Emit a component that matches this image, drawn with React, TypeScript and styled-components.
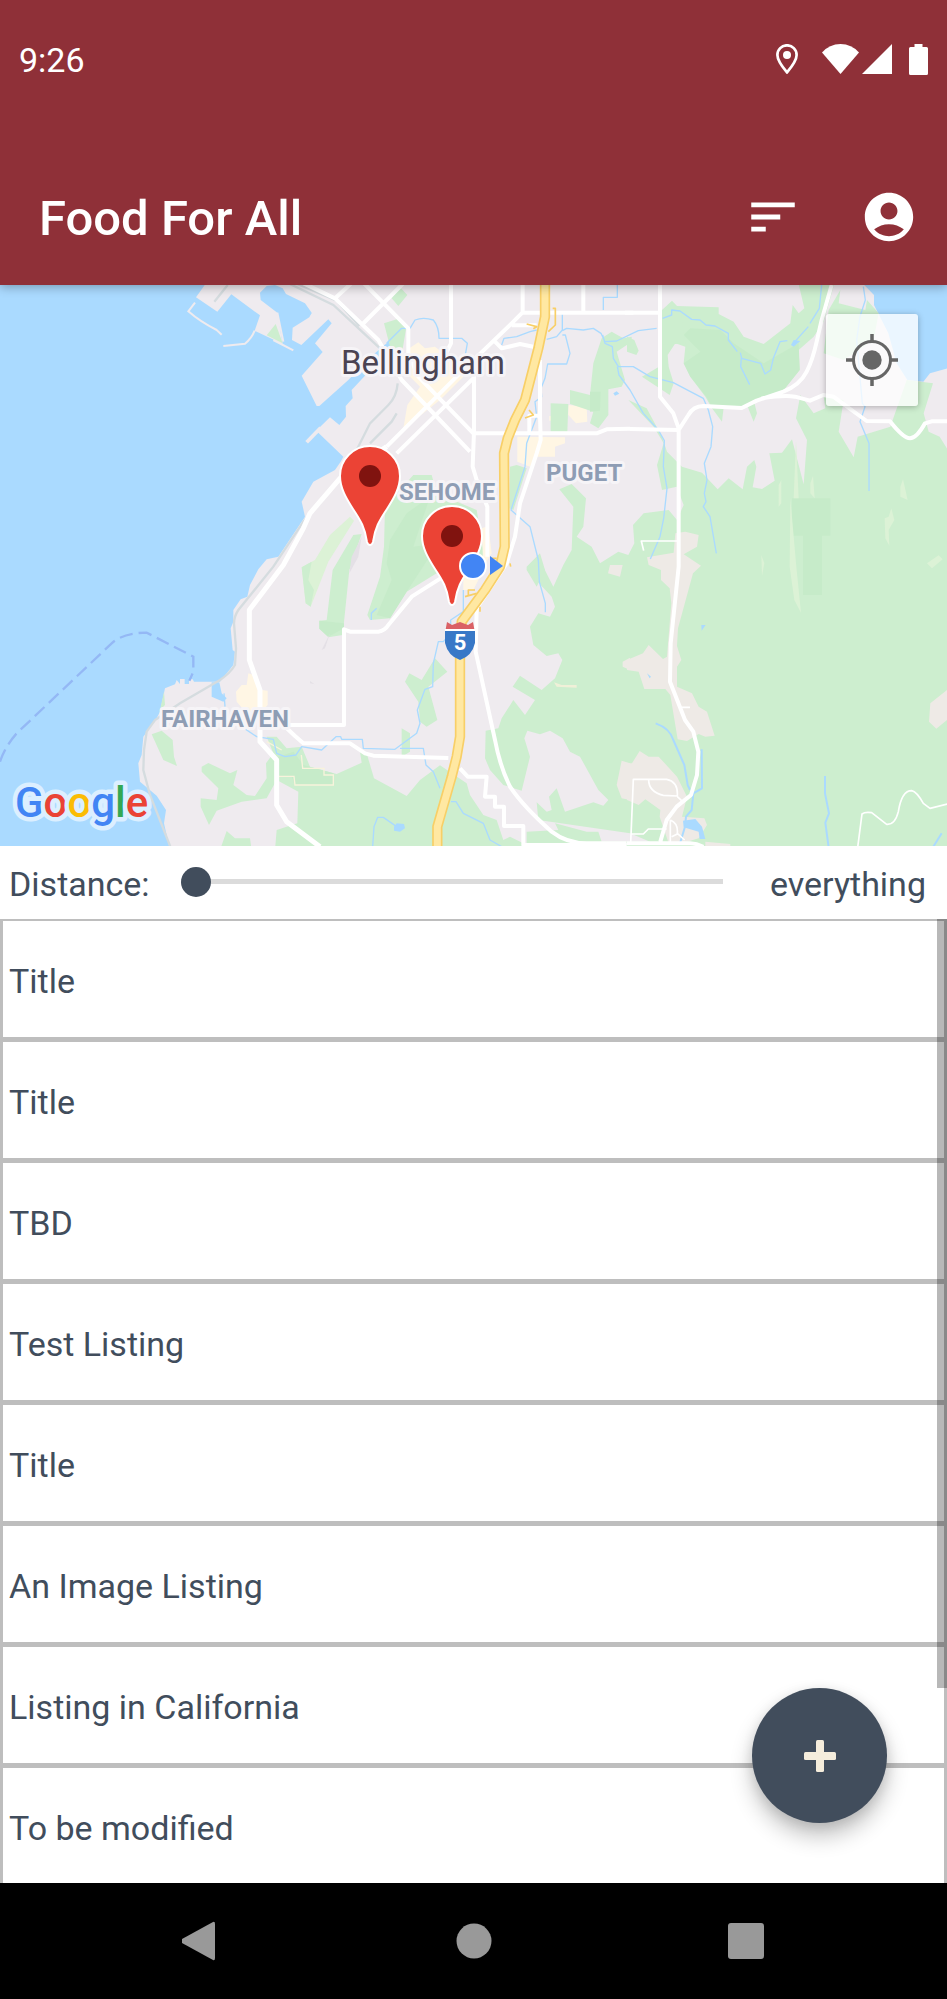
import React, { useState } from "react";
import styled, { createGlobalStyle } from "styled-components";
import { MdAccountCircle, MdSort } from "react-icons/md";

const ink = "#414d5c";
const water = "#aadaff";
const green = "#cdeecf";
const darkGreen = "#c6ebc9";
const paleGreen = "#dcf2d6";
const land = "#efebef";
const beige = "#eeeae6";
const sand = "#fff6e4";

const GlobalStyle = createGlobalStyle`
  *, *::before, *::after { box-sizing: border-box; }
  body { margin: 0; background: #ffffff; }
  button { border: 0; padding: 0; background: none; cursor: pointer; }
`;

const Screen = styled.div`
  display: flex;
  flex-direction: column;
  height: 100vh;
  min-height: 1400px;
  color: ${ink};
  font-family: Roboto, "Liberation Sans", sans-serif;
  font-size: 34px;
  line-height: 40px;
`;

const Header = styled.header`
  position: relative;
  z-index: 1;
  flex: none;
  color: #ffffff;
  background: #8f3038;
  box-shadow: 0 2px 10px rgba(0, 0, 0, 0.3);
`;

const StatusBar = styled.div`
  display: flex;
  align-items: center;
  justify-content: space-between;
  height: 120px;
  padding: 0 19px;
`;

const StatusIcons = styled.div`
  display: flex;
  align-items: center;
  padding-bottom: 2px;
`;

const StatusIcon = styled.svg<{ $gap: number }>`
  display: block;
  margin-left: ${(p) => p.$gap}px;
  fill: #ffffff;
`;

const AppBar = styled.div`
  display: flex;
  align-items: center;
  justify-content: space-between;
  height: 165px;
  padding: 29px 29px 0 39px;
`;

const AppTitle = styled.h1`
  margin: 0;
  padding-top: 4px;
  font-size: 49px;
  font-weight: 500;
  line-height: 56px;
`;

const Actions = styled.div`
  display: flex;
  gap: 58px;
`;

const ActionButton = styled.button`
  display: block;
  height: 58px;
  color: #ffffff;
  font-size: 58px;
  line-height: 1;

  svg { display: block; }
`;

const MapPanel = styled.section`
  position: relative;
  flex: none;
  height: 561px;
  overflow: hidden;
  background: ${water};
`;

const MapDrawing = styled.svg`
  display: block;
  width: 100%;
  height: 100%;
`;

const MapLabel = styled.text`
  fill: #8e9db4;
  stroke: #f6f4f7;
  stroke-width: 6px;
  stroke-linejoin: round;
  paint-order: stroke;
  font-size: 24px;
  font-weight: 700;
`;

const CityLabel = styled(MapLabel)`
  fill: #4b4453;
  font-size: 33px;
  font-weight: 400;
`;

const Brand = styled.text`
  stroke: #dcefff;
  stroke-width: 9px;
  stroke-linejoin: round;
  paint-order: stroke;
  font-size: 42px;
  font-weight: 500;
`;

const LocateButton = styled.button`
  position: absolute;
  top: 29px;
  right: 29px;
  width: 92px;
  height: 92px;
  border-radius: 3px;
  background: rgba(255, 255, 255, 0.76);
  box-shadow: 0 1px 6px rgba(0, 0, 0, 0.28);

  svg { display: block; margin: auto; }
`;

const DistanceRow = styled.div`
  display: flex;
  flex: none;
  align-items: center;
  height: 73px;
  padding: 2px 21px 0 9px;
`;

const DistanceLabel = styled.label`
  width: 172px;
`;

const Slider = styled.input`
  flex: 1;
  min-width: 0;
  height: 30px;
  margin: 0 47px 4px 0;
  appearance: none;
  background: linear-gradient(#dbdbdb, #dbdbdb) center / 100% 5px no-repeat;

  &::-webkit-slider-thumb {
    width: 30px;
    height: 30px;
    border: 0;
    border-radius: 50%;
    appearance: none;
    background: radial-gradient(circle, ${ink} 15px, #ffffff 15px);
    background: ${ink};
  }
`;

const ListPanel = styled.main`
  position: relative;
  flex: 1;
  min-height: 0;
  overflow: hidden;
`;

const Listings = styled.ul`
  margin: 0;
  padding: 0;
  list-style: none;
`;

const Listing = styled.li`
  display: flex;
  align-items: center;
  height: 121px;
  padding: 3px 0 0 6px;
  border: solid #bebebe;
  border-width: 2px 3px 3px;
`;

const ScrollThumb = styled.div`
  position: absolute;
  top: 0;
  right: 0;
  width: 10px;
  height: 79.8%;
  background: rgba(0, 0, 0, 0.28);
`;

const AddButton = styled.button`
  position: absolute;
  right: 60px;
  bottom: 60px;
  width: 135px;
  height: 135px;
  border-radius: 50%;
  background: ${ink};
  box-shadow: 0 13px 22px rgba(0, 0, 0, 0.24), 0 3px 12px rgba(0, 0, 0, 0.1);

  svg { display: block; margin: auto; }
`;

const SystemNav = styled.nav`
  display: flex;
  flex: none;
  align-items: center;
  justify-content: center;
  gap: 200px;
  height: 116px;
  background: #000000;
`;

const NavButton = styled.button`
  width: 72px;
  height: 72px;

  svg { display: block; margin: auto; fill: #999999; }
`;

/* Terrain is drawn on a sheet three units to the pixel, in six sections. */
function Terrain() {
  return (
    <g transform="translate(0 280) scale(.333333)">
      <rect width="2841" height="1710" fill={land} />
      <path
        fill={water}
        d="M0 0H625L588 52L652 95L694 43L780 106L764 152L848 192L832 98L782 60L780 38L800 18L825 15L848 25L858 42L915 70L935 98L928 112L878 143L876 180L904 195L985 118L995 130L945 190L968 216L905 287L950 378H958L1045 300L1115 228L1160 190L1200 145L1214 150L1180 190L1125 255L1055 330L1058 355L1037 378L1038 410L1018 435L990 412L930 470L955 458L1030 530L1022 545L1005 570L940 605L905 665L915 710L835 830L800 838L775 868L750 915L742 950L722 958L700 990V1025L692 1045L698 1110L705 1115L700 1155L660 1205H582L578 1198H567V1212H554V1197H540V1212L530 1200L525 1213L495 1225L480 1295L470 1315L455 1335L430 1370L425 1425L415 1450L420 1505L470 1547L498 1590L492 1630L510 1710H0Z"
      />
      <path fill={water} d="M635 1207H658L665 1240L680 1255L670 1265L635 1250ZM925 95L935 100L925 110Z" />
      <path fill={water} d="M2578 0H2860V260L2790 280L2770 305L2722 300L2690 250L2665 160L2622 75V45Z" />
      <g fill="none" stroke={land}>
        <path strokeWidth="6" d="M585 68L565 94Q600 125 650 150L665 164M670 198L735 191Q755 175 764 152M820 180L880 211M832 98L850 185" />
        <path strokeWidth="11" d="M920 487L962 443" />
      </g>
      <path fill={green} d="M827 132L848 190L800 166ZM480 1290L492 1235L495 1275ZM455 1363L485 1352L518 1380L522 1430L531 1458L490 1440Z" />

      {/* woods west of the highway */}
      <path fill={paleGreen} d="M905 862L945 840L990 765L1050 710L1062 722L985 845L932 980L917 970Z" />
      <path fill={green} d="M905 862L935 845L925 900L942 930L932 980L917 970Z" />
      <g transform="translate(930 0)">
        <path fill={green} d="M245 55L270 22L292 45L265 78ZM222 130L270 115L290 135L275 225L240 200Z" />
        <path fill={green} d="M68 870L130 765L155 762L118 870L98 1065L55 1072L28 1046V1022L50 1020Z" />
        <path fill={darkGreen} d="M28 1022L102 1030V1045L55 1070L28 1046Z" />
        <path fill={green} d="M225 680L310 585L365 585L380 640L500 690L530 870L380 880L290 935L240 1015L180 1020L172 1005L210 890L222 800Z" />
        <path fill={darkGreen} d="M230 850L240 780L290 700L360 650L310 800L385 790L290 935L240 1015L200 1005L245 900Z" />
        <path fill={sand} d="M290 210L325 187L345 205L375 200L420 235L460 290L390 360L340 400L280 445L292 375L330 320L285 275ZM515 745L535 738L545 820L520 860ZM460 870H520L490 930H460Z" />
        <path fill={sand} d="M622 470L765 472L765 490L735 500L735 530L680 530L660 560L622 545ZM775 375L830 380L832 425L798 430L775 405ZM718 408H730V422H718Z" />
        <path fill={green} d="M620 555L650 565L610 690L598 685L600 560ZM650 860L690 820L705 870L680 920L650 870Z" />
        <path fill={green} d="M722 370L775 372L772 455L722 455ZM780 330L840 345L850 250L875 175L905 155L940 175L965 170V185L920 215L945 300L935 320L895 328L895 405L865 445L840 430L850 395L780 372Z" />
        <path fill={darkGreen} d="M840 335L872 335L870 392L840 395Z" />
        <path fill={green} d="M375 1135L412 1175L355 1220L382 1320L350 1340L330 1325L325 1265L285 1205L298 1180L335 1200ZM275 1345L300 1360V1415L275 1430Z" />
        <path fill="#e4e0e6" d="M155 770L145 830L118 880L125 830ZM0 1203L14 1213L0 1210ZM60 1060L45 1105L35 1110Z" />
      </g>

      {/* southern green belt */}
      <path fill={green} d="M605 1460L625 1449L690 1480L712 1470L700 1515L740 1545L765 1548L800 1495L798 1450L820 1420L800 1370L830 1370L860 1405L905 1400L930 1460L1010 1482L1085 1448L1080 1415L1100 1420L1122 1495L1220 1548L1260 1500L1320 1456L1400 1510L1410 1545L1450 1605L1490 1620L1510 1680L1530 1670L1570 1690V1710H825L830 1650L892 1630L895 1535L830 1500L800 1555L725 1565L650 1592L627 1635L602 1580V1555L650 1560L655 1525L605 1475ZM660 1710L680 1653L705 1675L750 1675L755 1710Z" />
      <path fill={darkGreen} d="M835 1430L880 1415L910 1455L1000 1480V1515H885L875 1490H835Z" />
      <path fill="none" stroke="#f8f3dc" strokeWidth="4" d="M800 1385L845 1410M835 1489H882L885 1515H1000V1485H972V1465H908L904 1425" />

      {/* eastern forest */}
      <path fill={green} d="M1580 870L1610 855L1632 865L1660 920L1690 855L1715 810L1720 680L1678 628L1715 612L1758 655L1750 740L1730 770L1775 800L1800 850L1855 815L1885 825L1903 790L1899 735L1931 700L2006 690L2031 720L2051 675L2030 620L1986 630L1971 555L1991 490L1961 440L1885 360L1940 385L1986 470L2001 515L2046 560L2106 578L2153 628L2186 595L2228 628L2241 560L2263 540L2269 560L2258 622L2286 627L2324 602L2308 520L2346 518L2376 478L2411 613L2421 480L2388 415L2401 345L2441 400L2476 385L2471 350L2531 360L2516 455L2561 532L2573 470L2671 440L2720 300L2799 310L2771 400L2786 455L2819 470L2850 520V1710H1580V1655L1675 1650L1665 1630L1760 1655L1795 1655L1805 1685H1950L1890 1660L1615 1620L1610 1567L1640 1595L1655 1590L1647 1550L1670 1525L1695 1595L1780 1567L1810 1577L1825 1560L1795 1530L1740 1430L1710 1415L1688 1375L1650 1352L1620 1363L1582 1352L1573 1375L1590 1430L1565 1532L1510 1515L1470 1470L1455 1435L1457 1352L1495 1345L1505 1315L1540 1260L1575 1305L1605 1260L1538 1220L1560 1187L1625 1230L1665 1195L1687 1140L1675 1120L1640 1128L1600 1095L1590 1040L1615 1000L1650 1010L1665 980L1655 950Z" />
      <g transform="translate(1881 0)">
        <path fill={green} d="M105 90L135 62L150 78L275 82V102L320 125L350 170L410 192L490 130L497 75L515 100L532 85L512 0H625L590 125L560 170L515 210L518 270L470 330L380 360L390 400L380 425L360 375L290 382L285 425L255 385L235 350L190 290L170 250L175 200L145 190L122 225L125 260L140 310L128 345L45 290L105 255ZM0 170L22 180L35 212L28 225L0 215ZM640 30L605 90L590 220L650 240L740 180L755 100L720 60L715 90L635 70Z" />
        <path fill={darkGreen} d="M170 165L190 145L280 150L320 190L410 250L515 190L518 270L470 330L345 380L255 380L238 350L190 290L170 250L220 215ZM495 655H610V767H585V945H528V767H495Z" />
        <path fill={green} d="M105 90H160L175 190L105 195Z" />
        <path fill={paleGreen} d="M507 480L515 655H500ZM490 655L508 860L522 998L502 960L488 860ZM455 615L463 600V670L455 680ZM550 610L558 588L563 655L550 640ZM820 620L828 598L842 660L820 650ZM773 715L785 710L793 685L802 720L785 750L787 797L775 775ZM900 850L935 826L947 838L915 865ZM403 825L412 850L405 888Z" />
        <path fill={beige} d="M60 832L140 818L145 760L175 755L215 765L210 800L170 823L222 857L198 880L153 1045L150 1098L163 1140L150 1160V1220L195 1240L215 1280L240 1295L263 1367L235 1370L215 1362L180 1383L152 1378L130 1245L115 1227H52L35 1175L0 1170V1140L48 1120L65 1095L108 1137L120 1130L133 970L128 925L102 900V870L65 855ZM0 1450L15 1450L38 1413L65 1430H95L150 1490L180 1550L165 1610L232 1615L240 1635L215 1675L180 1685L125 1690L98 1610L100 1590L55 1558L35 1575L0 1560ZM910 1270L960 1230V1320L928 1346L906 1325ZM235 1685L310 1692V1710H235Z" />
        <path fill={water} d="M168 1622L205 1617L225 1640L235 1677H218L215 1655L170 1642ZM223 1035H236L224 1052ZM60 1180L72 1190L68 1195ZM492 195L500 180L520 183L500 200Z" />
      </g>
      <path fill={beige} d="M1830 855H1868L1860 890L1824 880ZM1868 1145L1890 1133V1170L1868 1160ZM1850 1515L1865 1442L1890 1450V1560L1865 1555Z" />
      <path fill="#f0f0d8" d="M1662 1207L1685 1215H1730V1223L1670 1220Z" />

      {/* creeks */}
      <g fill="none" stroke={water} strokeWidth="4" strokeLinejoin="round">
        <path d="M1160 190L1205 145H1230L1245 120Q1270 110 1300 120Q1317 140 1317 175H1385L1402 190L1395 230" />
        <path d="M1505 195L1512 175L1550 170L1590 155L1610 150M1687 100V150L1670 170L1640 178M1687 165H1696L1710 220L1700 252H1643L1635 295L1623 325L1625 350L1605 365L1610 410L1580 490L1575 560L1533 690L1590 740L1615 840L1618 905L1636 970V997M1687 152L1700 145L1750 150L1780 145L1803 160L1815 185L1850 183L1915 152L1970 145M1808 165L1815 190L1837 200L1840 235L1855 260H1900L1950 290L2020 308L2110 355L2125 390L2138 440L2133 500L2113 550L2121 600L2113 640L2118 665L2110 680L2130 710L2149 820M1852 260L1857 285L1890 330L1930 400L1975 450L1993 482L1990 560L2001 625L1991 715L1980 770L1951 837M1810 90V52H1852V15" />
        <path d="M1988 115L2015 105V90L2040 93L2075 118L2100 120L2118 135L2145 138L2185 160V180L2212 215M2221 218L2225 235L2282 250L2295 282L2312 270L2320 235L2340 185L2362 182M2224 235L2222 260L2249 314M2465 15L2458 85L2430 130M2380 190L2425 140M2590 20L2596 60L2580 110L2570 180L2587 370L2595 380L2580 425L2607 490V633" />
        <path d="M1390 930V995L1352 1020L1352 1060L1330 1085L1315 1085L1300 1150L1298 1220L1275 1228L1252 1290L1260 1330L1250 1360L1185 1408L1090 1405L1087 1378H1025L1022 1370H1008L965 1410L905 1400L888 1425L855 1430L830 1420L820 1378L770 1370L725 1340M1200 1405H1270L1278 1455L1300 1475L1320 1525M1353 1565H1368L1390 1600L1450 1630L1470 1680L1505 1700M1190 1640L1150 1612H1133L1122 1640L1118 1700M1114 1020V1000L1130 985M672 1240L675 1280" />
        <path d="M1967 1330Q2010 1345 2020 1380L2053 1455L2063 1515L2070 1530M2105 1408L2106 1525L2080 1540L2075 1590L2058 1610L2055 1640L2040 1690M2475 1488V1540L2487 1600L2476 1628L2487 1710M2800 1700L2825 1660" strokeWidth="6" />
      </g>
      <path fill={water} d="M1182 1640L1190 1630L1212 1632L1215 1645L1200 1655L1182 1652ZM1840 340L1850 334L1858 341L1845 347Z" />
      <path fill="none" stroke="#94b8f5" strokeWidth="7" strokeDasharray="40 18" d="M0 1445Q15 1400 50 1360L335 1090Q370 1058 440 1058L580 1130V1175L568 1202" />
      <path fill={sand} d="M708 1235L725 1215H740L745 1180L760 1185L785 1230L803 1232V1275L780 1300H740L710 1265Z" />

      {/* railway */}
      <path fill="none" stroke="#d5dcdf" strokeWidth="7" d="M643 65L683 15M845 0L1000 75L1070 140L1140 205M865 0L1010 62L1078 138M1193 310Q1190 350 1165 375L1110 430L1070 510L1015 600L960 670L910 725L820 860L715 990Q702 1010 702 1030L708 1105L705 1155Q690 1180 660 1200L540 1270L465 1320L440 1355L432 1410L430 1470L450 1545L515 1710M1190 400L1175 425L1110 490" />

      {/* streets */}
      <g fill="none" stroke="#ffffff" strokeWidth="12" strokeLinejoin="round">
        <path d="M890 0L1005 55L1135 180L1205 300L1410 515M1005 55L1065 0M1082 0L1225 145V220L1255 290L1420 460M1220 0L1088 132M1353 15V190L1338 220M1900 98H1567L1535 130L1400 260L1160 500M1190 520L1425 290M1535 136H1610M1485 185L1505 205L1560 192L1600 200M1568 15V98M1750 15V95M1422 285V455L1418 560L1430 600L1462 680V830M1420 460H1790L1820 448L1890 446M1620 240V405L1622 480L1610 520L1560 670L1545 770L1520 850L1430 985L1427 1115L1485 1380Q1500 1460 1530 1520Q1570 1580 1655 1655Q1700 1690 1760 1690H1880M1588 455V407H1620" />
        <path strokeWidth="15" d="M1160 500L1020 595L930 700L910 745L850 855L748 990V1140L780 1230V1385L830 1440V1575L860 1625L960 1700" />
        <path d="M1330 890L1235 950L1165 1035Q1155 1052 1135 1055H1050L1032 1048V1335H850L885 1368L910 1390H1050L1095 1420L1120 1427L1345 1434M1380 1465L1403 1490H1460L1455 1550H1485V1580H1512V1638H1570V1695H1880" />
        <path d="M1875 98H1980V15V350L2020 400L2036 445V860L2012 1090L2010 1205L2055 1320L2080 1355L2095 1415L2091 1485L2073 1545L2030 1580L2000 1620L1981 1685M1890 447L2036 450L2065 405Q2080 378 2110 378L2225 384L2270 362L2350 335Q2400 315 2420 275Q2438 240 2450 185L2465 120L2495 15M2285 355Q2350 345 2385 350L2430 362L2470 345L2500 350L2600 423L2670 424Q2710 475 2730 475Q2750 475 2775 430L2795 424H2850M1881 1690H2070Q2090 1690 2110 1700" />
        <path strokeWidth="5" d="M1931 812L1924 783H2034M2046 1282H2070M1892 1690L1900 1498H2000Q2035 1505 2032 1548L1990 1546Q1945 1535 1946 1498M1892 1662H1930L1945 1647H2000M2032 1550L2045 1562M2011 1620Q2035 1630 2032 1660L2054 1680M2011 1620V1690M2015 1670L2032 1662M2572 1710L2586 1602Q2595 1595 2615 1598L2660 1633Q2685 1635 2695 1595Q2705 1532 2735 1532Q2750 1535 2770 1570L2790 1585L2850 1570" />
      </g>

      {/* interstate */}
      <g fill="none" strokeLinejoin="round">
        <path stroke="#f8cf67" strokeWidth="5" d="M1580 132L1610 140L1600 146M1658 85H1666V135L1645 155M1587 390L1600 405L1575 414M1425 930H1405V945M1430 940L1395 950M1440 980V995M1475 835H1490M1530 850L1532 860" />
        <path stroke="#f8cf67" strokeWidth="31" d="M1635 0V110L1615 205L1575 360L1545 420L1523 475L1512 520L1514 800L1500 860L1455 930L1385 1025L1380 1120V1370L1370 1430L1355 1490L1312 1640V1710" />
        <path stroke="#ffe8a2" strokeWidth="21" d="M1635 0V110L1615 205L1575 360L1545 420L1523 475L1512 520L1514 800L1500 860L1455 930L1385 1025L1380 1120V1370L1370 1430L1355 1490L1312 1640V1710" />
      </g>
    </g>
  );
}

function Marker({ x, y }: { x: number; y: number }) {
  return (
    <g transform={`translate(${x} ${y})`}>
      <path
        d="M0 -30A30 30 0 0 0 -30 0C-30 12 -24 22 -17 33C-9 45 -5 52 -3 66Q-2 69 0 69Q2 69 3 66C5 52 9 45 17 33C24 22 30 12 30 0A30 30 0 0 0 0 -30Z"
        fill="#eb4335"
        stroke="#ffffff"
        strokeWidth="2"
      />
      <circle r="11" fill="#80130f" />
    </g>
  );
}

function AreaMap() {
  return (
    <MapDrawing viewBox="0 285 947 561" preserveAspectRatio="xMidYMid slice" role="img" aria-label="Map of Bellingham">
      <Terrain />
      <CityLabel x="341" y="374">Bellingham</CityLabel>
      <MapLabel x="399" y="500">SEHOME</MapLabel>
      <MapLabel x="546" y="481">PUGET</MapLabel>
      <MapLabel x="161" y="727">FAIRHAVEN</MapLabel>
      <g transform="translate(460 641)">
        <path d="M-15 -8L-13 -19L-8 -16L0 -19L8 -16L13 -19L15 -8Z" fill="#da6166" />
        <path d="M-15 -10H15V2Q12 15 0 19Q-12 15 -15 2Z" fill="#3878c7" />
        <path d="M-15 -11H15" stroke="#ffffff" strokeWidth="2" />
        <text y="9" textAnchor="middle" fill="#ffffff" fontSize="22" fontWeight="700">5</text>
      </g>
      <Marker x={370} y={476} />
      <Marker x={452} y={536} />
      <path d="M490 556L503 566L490 575Z" fill="#4285f4" />
      <circle cx="473" cy="566" r="13" fill="#4285f4" stroke="#ffffff" strokeWidth="2" />
      <Brand x="15" y="817">
        <tspan fill="#4285f4">G</tspan>
        <tspan fill="#ea4335">o</tspan>
        <tspan fill="#fbbc04">o</tspan>
        <tspan fill="#4285f4">g</tspan>
        <tspan fill="#34a853">l</tspan>
        <tspan fill="#ea4335">e</tspan>
      </Brand>
    </MapDrawing>
  );
}

const listings = [
  "Title",
  "Title",
  "TBD",
  "Test Listing",
  "Title",
  "An Image Listing",
  "Listing in California",
  "To be modified",
];

export default function App() {
  const [distance, setDistance] = useState(0);

  return (
    <>
      <GlobalStyle />
      <Screen>
        <Header>
          <StatusBar>
            <span>9:26</span>
            <StatusIcons>
              <StatusIcon $gap={0} width="22" height="30" viewBox="0 0 22 30">
                <path d="M11 1.3A9.6 9.6 0 0 0 1.4 10.9C1.4 17 7 23.5 11 28.3C15 23.5 20.6 17 20.6 10.9A9.6 9.6 0 0 0 11 1.3Z" fill="none" stroke="#ffffff" strokeWidth="2.7" />
                <circle cx="11" cy="11" r="4" />
              </StatusIcon>
              <StatusIcon $gap={24} width="37" height="30" viewBox="0 0 37 30">
                <path d="M0 8.5Q7.5 0 18.5 0T37 8.5L18.5 30Z" />
              </StatusIcon>
              <StatusIcon $gap={3} width="30" height="30" viewBox="0 0 30 30">
                <path d="M30 0V30H0Z" />
              </StatusIcon>
              <StatusIcon $gap={17} width="19" height="31" viewBox="0 0 19 31">
                <path d="M5.5 0H13.5V3H17.5Q19 3 19 4.5V29.5Q19 31 17.5 31H1.5Q0 31 0 29.5V4.5Q0 3 1.5 3H5.5Z" />
              </StatusIcon>
            </StatusIcons>
          </StatusBar>
          <AppBar>
            <AppTitle>Food For All</AppTitle>
            <Actions>
              <ActionButton aria-label="Sort listings"><MdSort /></ActionButton>
              <ActionButton aria-label="Account"><MdAccountCircle /></ActionButton>
            </Actions>
          </AppBar>
        </Header>

        <MapPanel>
          <AreaMap />
          <LocateButton aria-label="Show my location">
            <svg width="52" height="52" viewBox="0 0 52 52" fill="none" stroke="#666666">
              <circle cx="26" cy="26" r="18.5" strokeWidth="3" />
              <path d="M26 0V8M26 44V52M0 26H8M44 26H52" strokeWidth="3.5" />
              <circle cx="26" cy="26" r="9.7" fill="#666666" stroke="none" />
            </svg>
          </LocateButton>
        </MapPanel>

        <DistanceRow>
          <DistanceLabel htmlFor="distance">Distance:</DistanceLabel>
          <Slider
            id="distance"
            type="range"
            min={0}
            max={100}
            value={distance}
            onChange={(e) => setDistance(Number(e.target.value))}
          />
          <output htmlFor="distance">{distance === 0 ? "everything" : `${distance} mi`}</output>
        </DistanceRow>

        <ListPanel>
          <Listings>
            {listings.map((name, i) => (
              <Listing key={i}>{name}</Listing>
            ))}
          </Listings>
          <ScrollThumb />
          <AddButton aria-label="Add listing">
            <svg width="32" height="32" viewBox="0 0 32 32" fill="#f5eddc">
              <rect x="12" width="8" height="32" rx="1.5" />
              <rect y="12" width="32" height="8" rx="1.5" />
            </svg>
          </AddButton>
        </ListPanel>

        <SystemNav aria-label="System">
          <NavButton aria-label="Back">
            <svg width="40" height="40" viewBox="2 0 40 40">
              <path d="M33 1Q35 0 35 3V37Q35 40 33 39L2 22Q0 20 2 18Z" />
            </svg>
          </NavButton>
          <NavButton aria-label="Home">
            <svg width="36" height="36" viewBox="0 0 36 36"><circle cx="18" cy="18" r="17.5" /></svg>
          </NavButton>
          <NavButton aria-label="Recent apps">
            <svg width="36" height="36" viewBox="0 0 36 36"><rect width="36" height="36" rx="3" /></svg>
          </NavButton>
        </SystemNav>
      </Screen>
    </>
  );
}
